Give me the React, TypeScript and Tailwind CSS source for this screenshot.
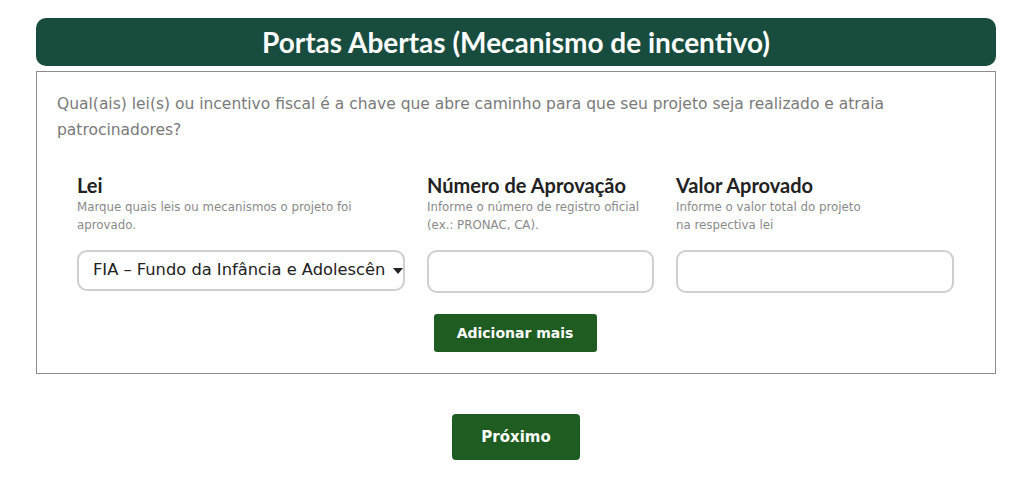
export default function App() {
  const body = { fontFamily: '"DejaVu Sans", "Open Sans", sans-serif' };
  const lato = { fontFamily: 'Lato, "Liberation Sans", sans-serif' };

  return (
    <div className="min-h-[498px] bg-white pt-[18px]">
      <div className="ml-[36px] w-[960px]">
        <div className="flex h-[48px] items-center justify-center rounded-[10px] bg-[#174c3e]">
          <h1 className="text-[28px] font-bold text-white" style={lato}>
            Portas Abertas (Mecanismo de incentivo)
          </h1>
        </div>

        <div className="mt-[5px] border border-[#8c8c8c] pb-[21px]">
          <p
            className="px-[20px] pt-[19px] text-[15.5px] leading-[26px] text-[#7a7a7a]"
            style={body}
          >
            Qual(ais) lei(s) ou incentivo fiscal é a chave que abre caminho para que seu projeto seja realizado e atraia patrocinadores?
          </p>

          <div className="mt-[29px] flex gap-[22px] px-[40px]">
            <div className="w-[328px]">
              <div className="text-[20px] font-bold leading-[26px] text-[#222]" style={lato}>
                Lei
              </div>
              <p className="h-[42px] text-[11.8px] leading-[18px] text-[#8a8a8a]" style={body}>
                Marque quais leis ou mecanismos o projeto foi
                <br />
                aprovado.
              </p>
              <div className="mt-[10px] flex h-[41px] items-center justify-between rounded-[10px] border-2 border-[#cfcfcf] pl-[14px] pr-0">
                <span className="overflow-hidden whitespace-nowrap text-[16.3px] text-[#222]" style={body}>
                  FIA – Fundo da Infância e Adolescên
                </span>
                <svg width="10" height="6" viewBox="0 0 10 6" className="shrink-0">
                  <path d="M0 0h10L5 6z" fill="#222" />
                </svg>
              </div>
            </div>

            <div className="w-[227px]">
              <div className="text-[20px] font-bold leading-[26px] text-[#222]" style={lato}>
                Número de Aprovação
              </div>
              <p className="h-[42px] text-[11.8px] leading-[18px] text-[#8a8a8a]" style={body}>
                Informe o número de registro oficial
                <br />
                (ex.: PRONAC, CA).
              </p>
              <div className="mt-[10px] h-[43px] rounded-[10px] border-2 border-[#cfcfcf]" />
            </div>

            <div className="w-[278px]">
              <div className="text-[20px] font-bold leading-[26px] text-[#222]" style={lato}>
                Valor Aprovado
              </div>
              <p className="h-[42px] text-[11.8px] leading-[18px] text-[#8a8a8a]" style={body}>
                Informe o valor total do projeto
                <br />
                na respectiva lei
              </p>
              <div className="mt-[10px] h-[43px] rounded-[10px] border-2 border-[#cfcfcf]" />
            </div>
          </div>

          <div className="mt-[21px] flex justify-center pr-[2px]">
            <button
              className="h-[38px] w-[163px] rounded-[3px] bg-[#1e5c22] text-[14px] font-bold text-white"
              style={body}
            >
              Adicionar mais
            </button>
          </div>
        </div>

        <div className="mt-[40px] flex justify-center">
          <button
            className="h-[46px] w-[128px] rounded-[4px] bg-[#1e5c22] text-[15px] font-bold text-white"
            style={body}
          >
            Próximo
          </button>
        </div>
      </div>
    </div>
  );
}
